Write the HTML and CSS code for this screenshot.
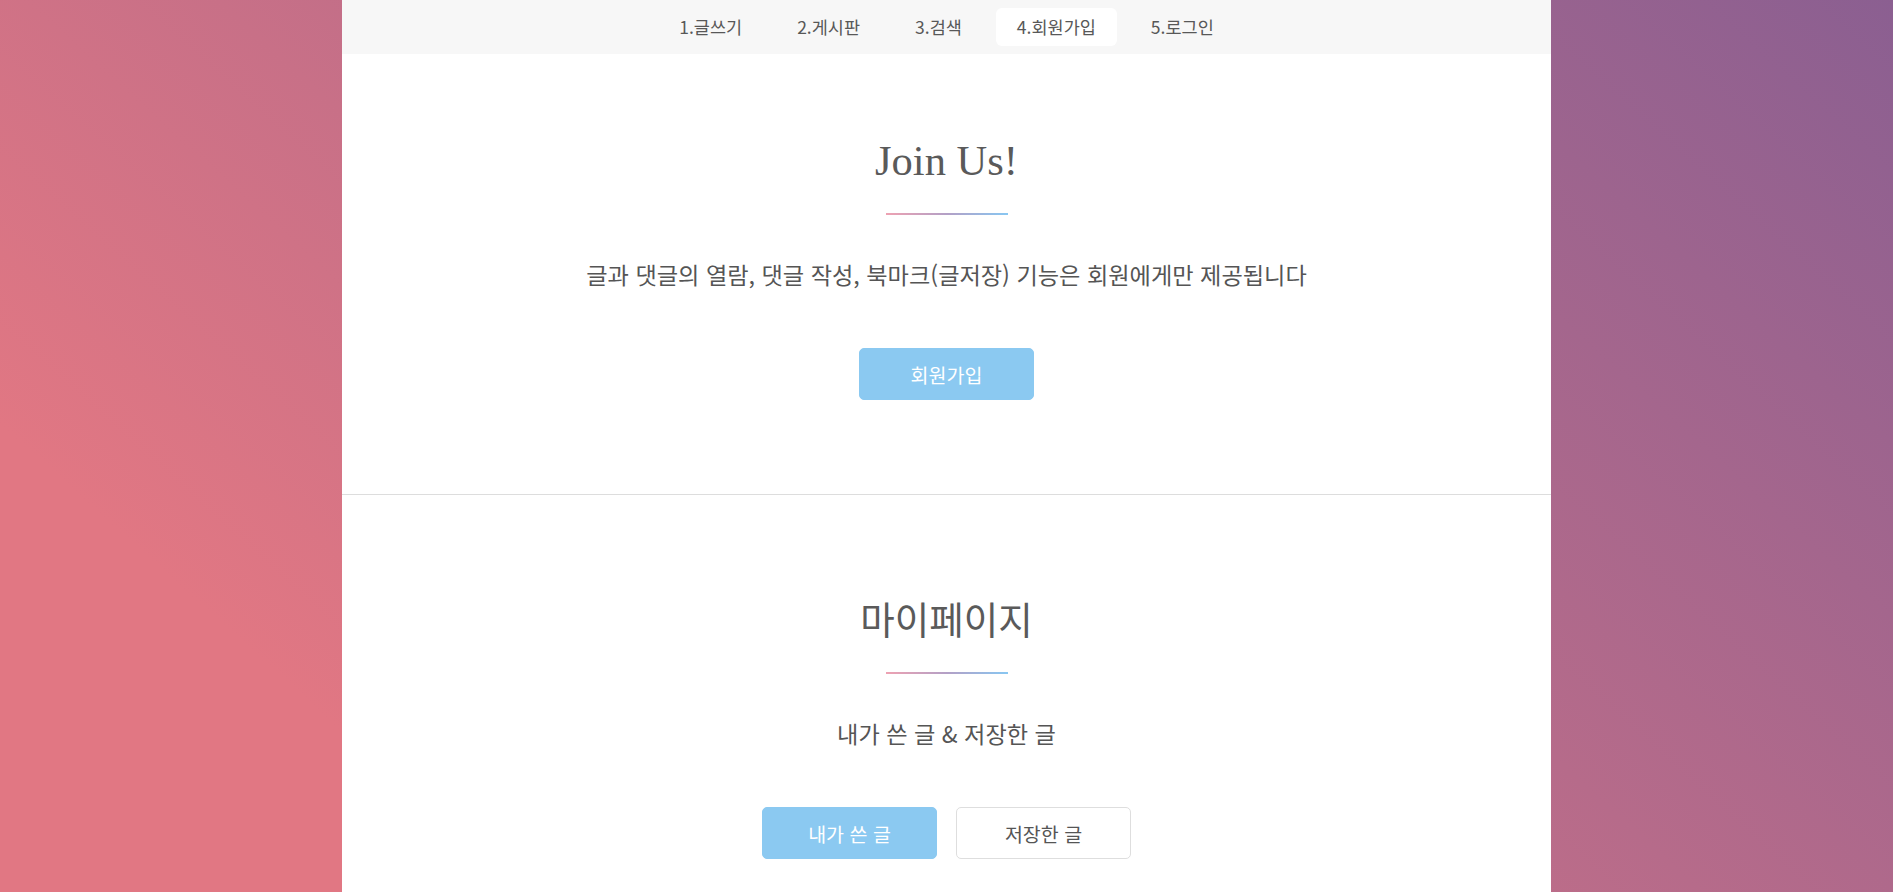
FILE: index.html
```html
<!DOCTYPE html>
<html lang="ko">
<head>
<meta charset="utf-8">
<title>Join Us</title>
<link rel="stylesheet" href="styles.css">
</head>
<body>
<div class="page">
  <nav class="nav">
    <a class="nav-item" href="#">1.글쓰기</a>
    <a class="nav-item" href="#">2.게시판</a>
    <a class="nav-item" href="#">3.검색</a>
    <a class="nav-item active" href="#">4.회원가입</a>
    <a class="nav-item" href="#">5.로그인</a>
  </nav>

  <section class="section section-join">
    <h2 class="title title-serif">Join Us!</h2>
    <div class="bar"></div>
    <p class="desc">글과 댓글의 열람, 댓글 작성, 북마크(글저장) 기능은 회원에게만 제공됩니다</p>
    <div class="btns">
      <button class="btn btn-primary">회원가입</button>
    </div>
  </section>

  <section class="section section-my">
    <h2 class="title title-sans">마이페이지</h2>
    <div class="bar bar-my"></div>
    <p class="desc">내가 쓴 글 &amp; 저장한 글</p>
    <div class="btns">
      <button class="btn btn-primary">내가 쓴 글</button>
      <button class="btn btn-outline">저장한 글</button>
    </div>
  </section>
</div>
</body>
</html>
```

FILE: styles.css
```css
html, body {
  height: 100%;
  overflow: hidden;
}
body {
  margin: 0;
  background: linear-gradient(42deg, #e17783 18%, #8b5f91 100%);
  font-family: "Noto Sans CJK KR", "Noto Sans", sans-serif;
  color: #555;
}
.page {
  width: 1209px;
  margin: 0 auto;
  background: #fff;
  min-height: 100%;
}
.nav {
  height: 54px;
  background: #f7f7f7;
  display: flex;
  justify-content: center;
  align-items: center;
  gap: 13px;
}
.nav-item {
  display: block;
  height: 38px;
  line-height: 38px;
  padding: 0 21px;
  border-radius: 6px;
  font-size: 17.5px;
  color: #585858;
  text-decoration: none;
}
.nav-item.active {
  background: #fff;
}
.section {
  display: flex;
  flex-direction: column;
  align-items: center;
}
.section-join {
  padding: 82px 0 94px;
  border-bottom: 1px solid #dddddd;
}
.section-my {
  padding: 100px 0 94px;
}
.title {
  margin: 0;
  font-weight: normal;
  color: #5a5a5a;
}
.title-serif {
  font-family: "Liberation Serif", "Times New Roman", serif;
  font-size: 42.5px;
  line-height: 50px;
}
.title-sans {
  font-size: 37.5px;
  line-height: 46px;
}
.bar {
  width: 122px;
  height: 2px;
  margin-top: 27px;
  background: linear-gradient(to right, #eea2b2, #b3a0c6 50%, #88c7f2);
}
.bar-my {
  margin-top: 31px;
}
.desc {
  margin: 43px 0 0;
  font-size: 23.2px;
  line-height: 32px;
  color: #555;
}
.btns {
  display: flex;
  gap: 19px;
  margin-top: 58px;
}
.btn {
  width: 175px;
  height: 52px;
  border-radius: 5px;
  font-family: "Noto Sans CJK KR", "Noto Sans", sans-serif;
  font-size: 19.5px;
  cursor: pointer;
}
.btn-primary {
  background: #8bc9f1;
  border: 1px solid #8bc9f1;
  color: #fff;
}
.btn-outline {
  background: #fff;
  border: 1px solid #dedede;
  color: #555;
}
```
